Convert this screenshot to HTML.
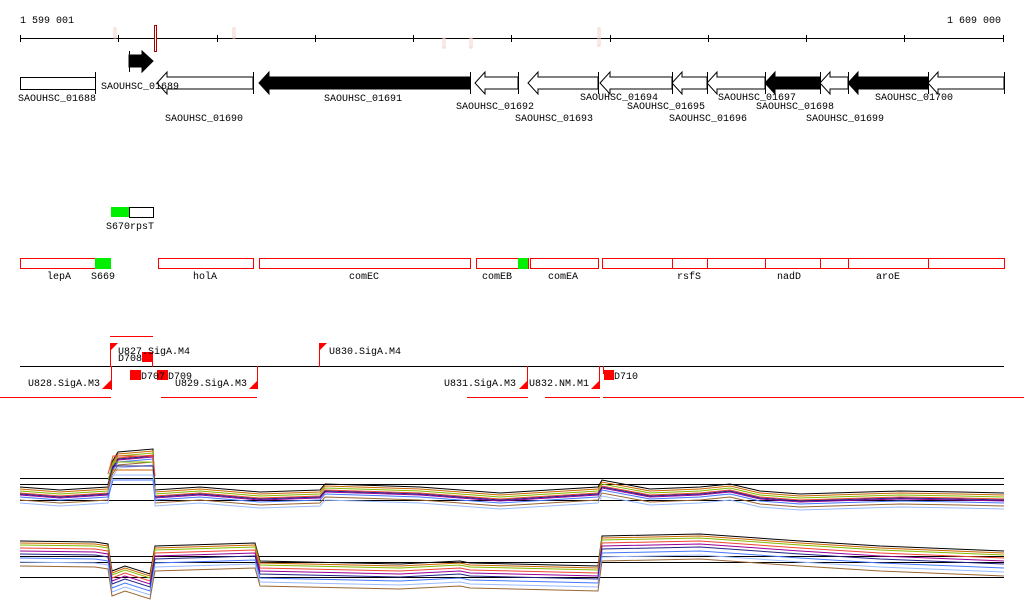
<!DOCTYPE html><html><head><style>body{margin:0;background:#fff}svg{display:block}text{font-family:"Liberation Mono",monospace;font-size:10px;fill:#000}</style></head><body>
<svg width="1024" height="611" viewBox="0 0 1024 611" xmlns="http://www.w3.org/2000/svg">
<text x="20" y="23">1 599 001</text><text x="947" y="23">1 609 000</text>
<line x1="20" y1="38.5" x2="1004" y2="38.5" stroke="#000"/>
<g stroke="#000"><path d="M20.5 35v7M118.5 35v7M217.5 35v7M315.5 35v7M413.5 35v7M511.5 35v7M610.5 35v7M708.5 35v7M806.5 35v7M904.5 35v7M1003.5 35v7"/></g>
<g fill="none" stroke="#f4d0c8"><rect x="114" y="28" width="2" height="10"/><rect x="233" y="28" width="2" height="10"/><rect x="443" y="38" width="2" height="10"/><rect x="470" y="38" width="2" height="10"/><rect x="598" y="28" width="2" height="18"/></g>
<rect x="154.5" y="25.5" width="2" height="26" fill="#fff" stroke="#a00"/>
<g stroke="#000"><rect x="20.5" y="77.5" width="75" height="12" fill="#fff"/><line x1="95.5" y1="72" x2="95.5" y2="94"/>
<polygon points="129,55 142,55 142,51 153,61 142,72 142,67 129,67" fill="#000"/><line x1="129.5" y1="51" x2="129.5" y2="72"/>
<g fill="#fff"><polygon points="157,83 167,72 167,77 253,77 253,89 167,89 167,94"/>
<polygon points="475,83 485,72 485,77 518,77 518,89 485,89 485,94"/>
<polygon points="528,83 538,72 538,77 598,77 598,89 538,89 538,94"/>
<polygon points="600,83 610,72 610,77 672,77 672,89 610,89 610,94"/>
<polygon points="672,83 682,72 682,77 707,77 707,89 682,89 682,94"/>
<polygon points="707,83 717,72 717,77 765,77 765,89 717,89 717,94"/>
<polygon points="820,83 830,72 830,77 848,77 848,89 830,89 830,94"/>
<polygon points="928,83 938,72 938,77 1004,77 1004,89 938,89 938,94"/></g>
<g fill="#000"><polygon points="259,83 269,72 269,77 470,77 470,89 269,89 269,94"/>
<polygon points="765,83 775,72 775,77 820,77 820,89 775,89 775,94"/>
<polygon points="848,83 858,72 858,77 928,77 928,89 858,89 858,94"/></g>
<path d="M253.5 72v22M470.5 72v22M518.5 72v22M598.5 72v22M672.5 72v22M707.5 72v22M765.5 72v22M820.5 72v22M848.5 72v22M928.5 72v22M1004.5 72v22"/></g>
<text x="18" y="101">SAOUHSC_01688</text><text x="101" y="89">SAOUHSC_01689</text><text x="165" y="121">SAOUHSC_01690</text><text x="324" y="101">SAOUHSC_01691</text><text x="456" y="109">SAOUHSC_01692</text><text x="515" y="121">SAOUHSC_01693</text><text x="580" y="100">SAOUHSC_01694</text><text x="627" y="109">SAOUHSC_01695</text><text x="669" y="121">SAOUHSC_01696</text><text x="718" y="100">SAOUHSC_01697</text><text x="756" y="109">SAOUHSC_01698</text><text x="806" y="121">SAOUHSC_01699</text><text x="875" y="100">SAOUHSC_01700</text>
<rect x="111" y="207" width="18" height="10" fill="#0e0"/><rect x="129.5" y="207.5" width="24" height="10" fill="#fff" stroke="#000"/>
<text x="106" y="229">S670rpsT</text>
<g fill="none" stroke="#f00"><rect x="20.5" y="258.5" width="75" height="10"/><rect x="158.5" y="258.5" width="95" height="10"/><rect x="259.5" y="258.5" width="211" height="10"/><rect x="476.5" y="258.5" width="52" height="10"/><rect x="530.5" y="258.5" width="68" height="10"/><rect x="602.5" y="258.5" width="70" height="10"/><rect x="672.5" y="258.5" width="35" height="10"/><rect x="707.5" y="258.5" width="58" height="10"/><rect x="765.5" y="258.5" width="55" height="10"/><rect x="820.5" y="258.5" width="28" height="10"/><rect x="848.5" y="258.5" width="80" height="10"/><rect x="928.5" y="258.5" width="76" height="10"/></g>
<rect x="95" y="258" width="16" height="11" fill="#0e0"/><rect x="518" y="258" width="10" height="11" fill="#0e0"/>
<text x="47" y="279">lepA</text><text x="91" y="279">S669</text><text x="193" y="279">holA</text><text x="349" y="279">comEC</text><text x="482" y="279">comEB</text><text x="548" y="279">comEA</text><text x="677" y="279">rsfS</text><text x="777" y="279">nadD</text><text x="876" y="279">aroE</text>
<line x1="20" y1="366.5" x2="1004" y2="366.5" stroke="#000"/>
<g stroke="#f00" fill="none"><path d="M110 336.5h43M0 397.5h111M161 397.5h96M467 397.5h61M545 397.5h55M603 397.5h421M110.5 343v24M152.5 352v15M319.5 343v24M111.5 366v24M257.5 366v22M527.5 366v22M599.5 366v22M603.5 366v8"/></g>
<g fill="#f00"><polygon points="110,343 118,343 110,351"/><polygon points="319,343 327,343 319,351"/>
<polygon points="111,389 111,380 102,389"/><polygon points="258,389 258,380 249,389"/><polygon points="528,389 528,380 519,389"/><polygon points="600,389 600,380 591,389"/>
<rect x="142" y="352" width="10" height="10"/><rect x="130" y="370" width="11" height="10"/><rect x="157" y="370" width="11" height="10"/><rect x="604" y="370" width="10" height="10"/></g>
<text x="118" y="354">U827.SigA.M4</text><text x="118" y="361">D708</text><text x="329" y="354">U830.SigA.M4</text><text x="28" y="386">U828.SigA.M3</text><text x="141" y="379">D707</text><text x="168" y="379">D709</text><text x="175" y="386">U829.SigA.M3</text><text x="444" y="386">U831.SigA.M3</text><text x="529" y="386">U832.NM.M1</text><text x="614" y="379">D710</text>
<g stroke="#000"><path d="M20 478.5h984M20 484.5h984M20 500.5h984M20 556.5h984M20 562.5h984M20 577.5h984"/></g>
<defs><path id="t" fill="none" d="M20,490 L60,493 L108,490 L112,465 L118,455 L153,452 L155,493 L200,490 L260,495 L320,493 L325,487 L420,490 L500,496 L598,490 L602,483 L650,492 L700,490 L730,487 L760,494 L800,497 L900,494 L960,495 L1004,496"/>
<path id="t2" fill="none" d="M108,488 L113,470 L153,470 L155,490"/>
<path id="b" fill="none" d="M20,545 L95,546 L108,548 L112,575 L125,570 L150,578 L155,550 L255,547 L260,565 L400,568 L460,565 L470,567 L598,570 L602,540 L700,538 L800,545 L880,550 L1004,555"/></defs>
<use href="#t" stroke="#000" transform="translate(0,-3)"/><use href="#t" stroke="#c60" transform="translate(0,-1)"/><use href="#t" stroke="#8b0" transform="translate(0,1)"/><use href="#t" stroke="#e43" transform="translate(0,3)"/><use href="#t" stroke="#909" transform="translate(0,5)"/><use href="#t" stroke="#47f" transform="translate(0,7)"/><use href="#t" stroke="#963" transform="translate(0,10)"/><use href="#t" stroke="#9bf" transform="translate(0,13)"/><use href="#t" stroke="#228" transform="translate(0,4)"/>
<use href="#t2" stroke="#c60"/><use href="#t2" stroke="#8b0" transform="translate(0,-8)"/><use href="#t2" stroke="#e43" transform="translate(0,-14)"/><use href="#t2" stroke="#228" transform="translate(0,-4)"/><use href="#t2" stroke="#9bf" transform="translate(0,5)"/><use href="#t2" stroke="#47f" transform="translate(0,10)"/>
<use href="#b" stroke="#000" transform="translate(0,-4)"/><use href="#b" stroke="#c60" transform="translate(0,-2)"/><use href="#b" stroke="#8b0" transform="translate(0,0)"/><use href="#b" stroke="#e43" transform="translate(0,3)"/><use href="#b" stroke="#909" transform="translate(0,6)"/><use href="#b" stroke="#228" transform="translate(0,9)"/><use href="#b" stroke="#47f" transform="translate(0,13)"/><use href="#b" stroke="#9bf" transform="translate(0,17)"/><use href="#b" stroke="#963" transform="translate(0,21)"/>
</svg></body></html>
